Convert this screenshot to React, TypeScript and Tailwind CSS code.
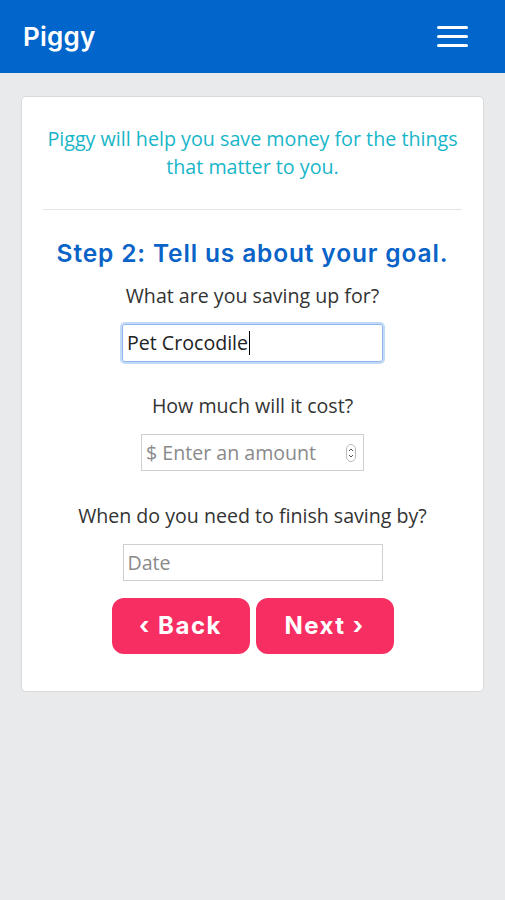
import React from "react";

export default function App() {
  const body = { fontFamily: '"Open Sans", "Liberation Sans", sans-serif' };
  const head = { fontFamily: 'Inter, "Liberation Sans", sans-serif' };
  return (
    <div className="min-h-[900px] bg-[#e9eaec]" style={body}>
      <header className="h-[73px] bg-[#0066cc] flex items-center justify-between pl-[23px] pr-[37px]">
        <span className="text-white text-[26px] font-semibold tracking-[0.2px]" style={head}>Piggy</span>
        <div className="flex flex-col gap-[6px] w-[31px]">
          <span className="block h-[3px] bg-white rounded-sm" />
          <span className="block h-[3px] bg-white rounded-sm" />
          <span className="block h-[3px] bg-white rounded-sm" />
        </div>
      </header>
      <main className="px-[21px] pt-[23px]">
        <div className="bg-white border border-[#d9d9d9] rounded-[5px] px-[21px] pt-[28px] pb-[37px] flex flex-col items-center">
          <p className="text-[#17b5c9] text-[19.7px] leading-[28px] text-center">
            Piggy will help you save money for the things<br />that matter to you.
          </p>
          <hr className="w-full border-0 border-t border-[#e3e3e3] mt-[28px]" />
          <h2 className="text-[#0a63c7] text-[24.5px] font-semibold leading-[30px] mt-[28px] tracking-[0.85px]" style={head}>
            Step 2: Tell us about your goal.
          </h2>
          <label className="text-[#333] text-[19.6px] leading-[28px] mt-[14px]">What are you saving up for?</label>
          <div className="mt-[14px] w-[261px] h-[38px] border border-[#8fb7ec] rounded-[3px] shadow-[0_0_0_2px_rgba(120,170,240,0.45)] flex items-center px-[4px] text-[19.6px] text-[#222]">
            Pet Crocodile<span className="inline-block w-[1px] h-[24px] bg-black ml-[1px]" />
          </div>
          <label className="text-[#333] text-[19.6px] leading-[28px] mt-[30px]">How much will it cost?</label>
          <div className="relative mt-[14px] w-[223px] h-[37px] border border-[#cfcfcf] flex items-center px-[4px] text-[19.6px] text-[#8a8a8a]">
            $ Enter an amount
            <svg className="absolute right-[7px] top-[9px]" width="10" height="18" viewBox="0 0 10 18">
              <rect x="0.5" y="0.5" width="9" height="17" rx="4.5" fill="#fff" stroke="#bbb" />
              <path d="M3 7 L5 5 L7 7" fill="none" stroke="#555" strokeWidth="1" />
              <path d="M3 11 L5 13 L7 11" fill="none" stroke="#555" strokeWidth="1" />
            </svg>
          </div>
          <label className="text-[#333] text-[19.6px] leading-[28px] mt-[31px]">When do you need to finish saving by?</label>
          <div className="mt-[14px] w-[260px] h-[37px] border border-[#cfcfcf] flex items-center px-[4px] text-[19.6px] text-[#8a8a8a]">
            Date
          </div>
          <div className="mt-[17px] flex gap-[6px]">
            <button className="w-[138px] h-[56px] rounded-[12px] bg-[#f72e62] text-white text-[24px] font-bold tracking-[1.5px]" style={head}>‹ Back</button>
            <button className="w-[138px] h-[56px] rounded-[12px] bg-[#f72e62] text-white text-[24px] font-bold tracking-[1.5px]" style={head}>Next ›</button>
          </div>
        </div>
      </main>
    </div>
  );
}
